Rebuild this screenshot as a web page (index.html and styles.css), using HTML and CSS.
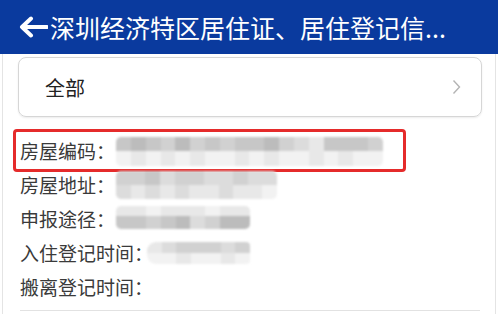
FILE: index.html
```html
<!DOCTYPE html>
<html lang="zh-CN">
<head>
<meta charset="utf-8">
<title>居住登记信息</title>
<link rel="stylesheet" href="styles.css">
</head>
<body>
<header class="topbar">
  <svg class="back" width="30" height="22" viewBox="0 0 30 22" aria-hidden="true">
    <path d="M29 11 H4 M13 2.5 L4 11 L13 19.5" fill="none" stroke="#fff" stroke-width="4" stroke-linecap="round" stroke-linejoin="round"/>
  </svg>
  <h1 class="title">深圳经济特区居住证、居住登记信...</h1>
</header>
<main class="page">
  <div class="select">
    <span class="select-text">全部</span>
    <svg class="chev" width="9" height="16" viewBox="0 0 9 16" aria-hidden="true">
      <path d="M1.5 1.5 L7.5 8 L1.5 14.5" fill="none" stroke="#b4b4b4" stroke-width="1.4"/>
    </svg>
  </div>
  <div class="list">
    <div class="mark"></div>
    <div class="row">
      <span class="label">房屋编码：</span>
      <div class="mosaic m1">
        <div class="band"><i class="g2"></i><i class="g1"></i><i class="g2"></i><i class="g3"></i><i class="g1"></i><i class="g3"></i><i class="g2"></i><i class="g3"></i><i class="g2"></i><i class="g2"></i><i class="g1"></i><i class="g3"></i><i class="g4"></i><i class="g5"></i><i class="g2"></i><i class="g2"></i><i class="g2"></i><i class="g3"></i></div>
        <div class="band"><i class="g6"></i><i class="g5"></i><i class="g6"></i><i class="g5"></i><i class="g6"></i><i class="g5"></i><i class="g6"></i><i class="g6"></i><i class="g5"></i><i class="g6"></i><i class="g5"></i><i class="g6"></i><i class="g6"></i><i class="g5"></i><i class="g6"></i><i class="g5"></i><i class="g6"></i><i class="g6"></i></div>
      </div>
    </div>
    <div class="row">
      <span class="label">房屋地址：</span>
      <div class="mosaic m2">
        <div class="band"><i class="g3"></i><i class="g3"></i><i class="g2"></i><i class="g4"></i><i class="g3"></i><i class="g3"></i><i class="g4"></i><i class="g4"></i><i class="g3"></i><i class="g4"></i><i class="g4"></i></div>
        <div class="band"><i class="g4"></i><i class="g5"></i><i class="g4"></i><i class="g5"></i><i class="g4"></i><i class="g5"></i><i class="g5"></i><i class="g4"></i><i class="g5"></i><i class="g5"></i><i class="g6"></i></div>
      </div>
    </div>
    <div class="row">
      <span class="label">申报途径：</span>
      <div class="mosaic m3">
        <div class="band"><i class="g5"></i><i class="g5"></i><i class="g6"></i><i class="g5"></i><i class="g5"></i><i class="g5"></i><i class="g6"></i><i class="g5"></i><i class="g5"></i></div>
        <div class="band"><i class="g2"></i><i class="g2"></i><i class="g3"></i><i class="g2"></i><i class="g1"></i><i class="g4"></i><i class="g3"></i><i class="g1"></i><i class="g1"></i></div>
      </div>
    </div>
    <div class="row">
      <span class="label">入住登记时间：</span>
      <div class="mosaic m4">
        <div class="band"><i class="g5"></i><i class="g4"></i><i class="g3"></i><i class="g3"></i><i class="g3"></i><i class="g4"></i><i class="g3"></i></div>
        <div class="band"><i class="g6"></i><i class="g6"></i><i class="g5"></i><i class="g6"></i><i class="g6"></i><i class="g5"></i><i class="g6"></i></div>
      </div>
    </div>
    <div class="row">
      <span class="label">搬离登记时间：</span>
    </div>
    <div class="divider"></div>
  </div>
</main>
</body>
</html>
```

FILE: styles.css
```css
* { box-sizing: border-box; }
html, body { margin: 0; padding: 0; background: #fff; }
body {
  width: 498px;
  height: 314px;
  overflow: hidden;
  font-family: "Noto Sans CJK SC", "Noto Sans", sans-serif;
}
.topbar {
  height: 54px;
  background: #0a3a9e;
  display: flex;
  align-items: center;
  padding-left: 18px;
  gap: 2px;
}
.back { flex: none; display: block; }
.title {
  margin: 0;
  font-size: 25px;
  font-weight: 400;
  color: #fff;
  line-height: 1;
  white-space: nowrap;
}
.page {
  margin: 0 2px;
  border-left: 1px solid #e4e4e4;
  border-right: 1px solid #e4e4e4;
  height: 260px;
  padding-top: 3px;
}
.select {
  margin-left: 15px;
  width: 464px;
  height: 60px;
  border: 1px solid #d6d6d6;
  border-radius: 8px;
  box-shadow: 0 1px 2px rgba(0,0,0,0.08);
  display: flex;
  align-items: center;
  justify-content: space-between;
  padding: 0 20px 0 26px;
}
.select-text {
  font-size: 20px;
  color: #222;
}
.chev { display: block; }
.list {
  position: relative;
  margin-top: 17px;
  padding-left: 17px;
}
.mark {
  position: absolute;
  left: 10px;
  top: -5px;
  width: 393px;
  height: 43px;
  border: 3px solid #e52b2b;
  border-radius: 4px;
}
.row {
  height: 34px;
  display: flex;
  align-items: center;
}
.label {
  font-size: 19px;
  line-height: 34px;
  color: #3a3a3a;
  white-space: nowrap;
}
.mosaic {
  display: flex;
  flex-direction: column;
  filter: blur(1px);
  border-radius: 5px;
  overflow: hidden;
}
.band { flex: 1; display: flex; }
.band i { flex: 1; }
.m1 { width: 267px; height: 29px; margin-left: 1px; }
.m2 { width: 161px; height: 28px; margin-left: 1px; }
.m3 { width: 134px; height: 23px; margin-left: 1px; margin-top: -4px; }
.m3 .band:first-child { flex: 0.8; }
.m4 { width: 103px; height: 22px; margin-left: -6px; border-radius: 9px 4px 4px 9px; }
.g1 { background: #bcbcbc; }
.g2 { background: #c7c7c7; }
.g3 { background: #d1d1d1; }
.g4 { background: #dcdcdc; }
.g5 { background: #e8e8e8; }
.g6 { background: #f2f2f2; }
.divider {
  margin-top: 6px;
  margin-left: 0;
  width: 460px;
  height: 1px;
  background: #e2e2e2;
}
```
